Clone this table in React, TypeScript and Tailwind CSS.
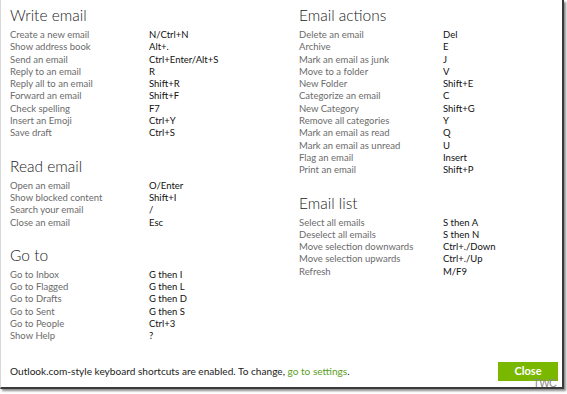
import React from 'react';

type Shortcut = [string, string];

interface SectionProps {
  title: string;
  items: Shortcut[];
  keyCol: number;
}

const writeEmail: Shortcut[] = [
  ['Create a new email', 'N/Ctrl+N'],
  ['Show address book', 'Alt+.'],
  ['Send an email', 'Ctrl+Enter/Alt+S'],
  ['Reply to an email', 'R'],
  ['Reply all to an email', 'Shift+R'],
  ['Forward an email', 'Shift+F'],
  ['Check spelling', 'F7'],
  ['Insert an Emoji', 'Ctrl+Y'],
  ['Save draft', 'Ctrl+S'],
];

const readEmail: Shortcut[] = [
  ['Open an email', 'O/Enter'],
  ['Show blocked content', 'Shift+I'],
  ['Search your email', '/'],
  ['Close an email', 'Esc'],
];

const goTo: Shortcut[] = [
  ['Go to Inbox', 'G then I'],
  ['Go to Flagged', 'G then L'],
  ['Go to Drafts', 'G then D'],
  ['Go to Sent', 'G then S'],
  ['Go to People', 'Ctrl+3'],
  ['Show Help', '?'],
];

const emailActions: Shortcut[] = [
  ['Delete an email', 'Del'],
  ['Archive', 'E'],
  ['Mark an email as junk', 'J'],
  ['Move to a folder', 'V'],
  ['New Folder', 'Shift+E'],
  ['Categorize an email', 'C'],
  ['New Category', 'Shift+G'],
  ['Remove all categories', 'Y'],
  ['Mark an email as read', 'Q'],
  ['Mark an email as unread', 'U'],
  ['Flag an email', 'Insert'],
  ['Print an email', 'Shift+P'],
];

const emailList: Shortcut[] = [
  ['Select all emails', 'S then A'],
  ['Deselect all emails', 'S then N'],
  ['Move selection downwards', 'Ctrl+./Down'],
  ['Move selection upwards', 'Ctrl+./Up'],
  ['Refresh', 'M/F9'],
];

const Section: React.FC<SectionProps> = ({ title, items, keyCol }) => (
  <div className="flex flex-col mb-[15px]">
    <h2 className="text-[15.5px] leading-[22px] font-light text-[#222] mb-[3px]">{title}</h2>
    {items.map(([label, key]) => (
      <div key={label} className="flex text-[9.5px] leading-[12.3px]">
        <span className="text-[#6b6b6b] shrink-0" style={{ width: keyCol }}>{label}</span>
        <span className="text-[#111]">{key}</span>
      </div>
    ))}
  </div>
);

export default function App() {
  return (
    <div className="w-[567px] h-[394px] bg-white relative" style={{ fontFamily: 'Lato, "Noto Sans", sans-serif' }}>
      <div className="w-[564px] h-[389px] bg-white border-l border-[#d8d8d8] border-r-[2px] border-b-[2px] border-r-[#3a3a3a] border-b-[#3a3a3a] shadow-[2px_2px_2px_rgba(0,0,0,0.45)] flex flex-col">
        <div className="flex flex-1 pt-[4px] pl-[9px]">
          <div className="w-[289px] flex flex-col">
            <Section title="Write email" items={writeEmail} keyCol={139} />
            <Section title="Read email" items={readEmail} keyCol={139} />
            <Section title="Go to" items={goTo} keyCol={139} />
          </div>
          <div className="flex flex-col">
            <Section title="Email actions" items={emailActions} keyCol={144} />
            <Section title="Email list" items={emailList} keyCol={144} />
          </div>
        </div>
        <div className="flex items-center justify-between pl-[9px] pr-[4px] pb-[6px]">
          <p className="text-[10.1px] text-[#222]">
            Outlook.com-style keyboard shortcuts are enabled. To change, <span className="text-[#5c9e1e]">go to settings</span>.
          </p>
          <button className="w-[60px] h-[19px] bg-[#7ab800] text-white text-[11px] font-bold">Close</button>
        </div>
      </div>
      <span className="absolute left-[533px] top-[377px] text-[11px] leading-[12px] text-[#8a8a8a] tracking-[-0.5px]" style={{ fontFamily: '"Liberation Sans", sans-serif' }}>TWC</span>
    </div>
  );
}
